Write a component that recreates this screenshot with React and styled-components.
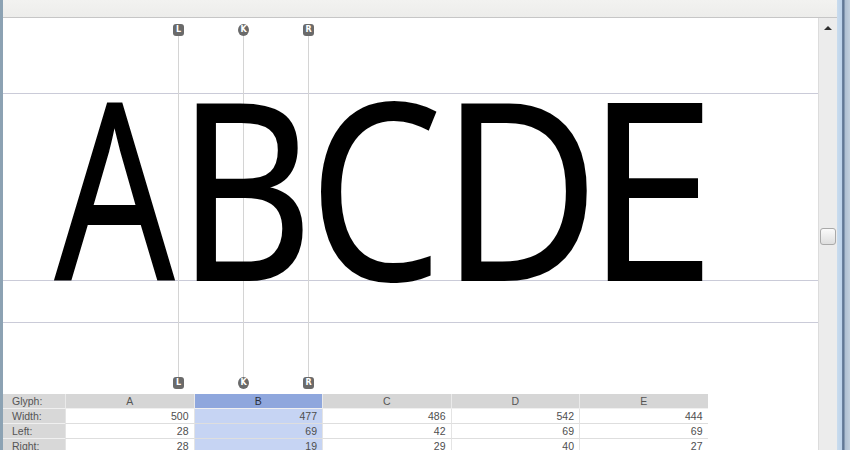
import React from "react";
import styled, { createGlobalStyle } from "styled-components";

const GlobalStyle = createGlobalStyle`
  html, body {
    margin: 0;
    padding: 0;
    background: #ffffff;
  }
  body {
    font-family: "Liberation Sans", Arial, sans-serif;
  }
`;

// units -> px in the metrics view
const UNIT = 0.2725;

const glyphs = [
  { ch: "A", width: 500, left: 28, right: 28, stretch: 0.77, shift: 13 },
  { ch: "B", width: 477, left: 69, right: 19, stretch: 0.86, shift: -1 },
  { ch: "C", width: 486, left: 42, right: 29, stretch: 0.86, shift: 1 },
  { ch: "D", width: 542, left: 69, right: 40, stretch: 0.89, shift: 0 },
  { ch: "E", width: 444, left: 69, right: 27, stretch: 0.95, shift: -2 },
];
const selected = "B";

const Window = styled.div`
  width: 850px;
  height: 450px;
  display: flex;
  flex-direction: row;
  overflow: hidden;
  background: #fff;
`;

const LeftEdge = styled.div`
  width: 3px;
  background: #8ca2b3;
`;

const Content = styled.div`
  flex: 1;
  display: flex;
  flex-direction: column;
  min-width: 0;
`;

const TopStrip = styled.div`
  height: 17px;
  flex-shrink: 0;
  background: linear-gradient(#f2f2f0, #ededeb);
  border-bottom: 1px solid #c6c6c6;
`;

const Body = styled.div`
  flex: 1;
  display: flex;
  flex-direction: row;
  min-height: 0;
`;

const Main = styled.div`
  flex: 1;
  display: flex;
  flex-direction: column;
  overflow: hidden;
`;

const Canvas = styled.div`
  position: relative;
  height: 376px;
  flex-shrink: 0;
  padding-top: 41px;
  box-sizing: border-box;
`;

const MetricLine = styled.div`
  position: absolute;
  left: 0;
  right: 0;
  top: ${(p) => p.$y}px;
  height: 1px;
  background: #cacbd8;
`;

const Guide = styled.div`
  position: absolute;
  left: ${(p) => p.$x}px;
  top: 18px;
  height: 341px;
  width: 1px;
  background: #d4d4d4;
`;

const Marker = styled.div`
  position: absolute;
  left: ${(p) => p.$x - 5}px;
  top: ${(p) => p.$y - 6}px;
  width: 11px;
  height: 12px;
  border-radius: ${(p) => (p.$round ? "50%" : "3px")};
  background: #6a6a6a;
  color: #fff;
  font-family: "DejaVu Sans", sans-serif;
  font-weight: bold;
  font-size: 8px;
  line-height: 12px;
  text-align: center;
`;

const GlyphRow = styled.div`
  display: flex;
  flex-direction: row;
  padding-left: 39px;
  position: relative;
`;

const GlyphCell = styled.div`
  width: ${(p) => p.$w}px;
  flex-shrink: 0;
  height: 252px;
  position: relative;
`;

const Letter = styled.span`
  display: inline-block;
  font-family: "Open Sans", sans-serif;
  font-size: 245px;
  line-height: 252px;
  color: #000;
  -webkit-text-stroke: 2px #000;
  white-space: nowrap;
  transform-origin: left center;
  transform: translateX(${(p) => p.$shift}px) scaleX(${(p) => p.$stretch});
`;

const Table = styled.div`
  display: grid;
  grid-template-columns: 62px repeat(5, 128.5px);
  grid-auto-rows: 15px;
  font-size: 10.5px;
  color: #4e4e4e;
`;

const LabelCell = styled.div`
  background: #d8d8d8;
  border-bottom: 1px solid #f0f0f0;
  padding-left: 9px;
  line-height: 14px;
  color: #555;
`;

const HeadCell = styled.div`
  background: ${(p) => (p.$selected ? "#8fa7dd" : "#d6d6d6")};
  border-bottom: 1px solid #f0f0f0;
  border-left: 1px solid #eaeaea;
  text-align: center;
  line-height: 14px;
  color: ${(p) => (p.$selected ? "#2a2f3a" : "#555")};
`;

const ValueCell = styled.div`
  background: ${(p) => (p.$selected ? "#c6d4f3" : "#ffffff")};
  border-bottom: 1px solid #dedede;
  border-left: 1px solid #e4e4e4;
  text-align: right;
  padding-right: 5px;
  line-height: 14px;
`;

const Scrollbar = styled.div`
  width: 18px;
  position: relative;
  background: #ececec;
  border-left: 1px solid #dcdcdc;
`;

const UpArrow = styled.div`
  position: absolute;
  left: 5px;
  top: 8px;
  width: 0;
  height: 0;
  border-left: 4px solid transparent;
  border-right: 4px solid transparent;
  border-bottom: 4px solid #2e2e2e;
`;

const Thumb = styled.div`
  position: absolute;
  left: 1px;
  top: 210px;
  width: 14px;
  height: 15px;
  border: 1px solid #a9a9a9;
  border-radius: 3px;
  background: linear-gradient(#fafafa, #dedede);
`;

const Frame = styled.div`
  width: 13px;
  background: linear-gradient(
    to right,
    #c9dcee 0px,
    #bcd2ea 5px,
    #6f86a3 5px,
    #5c7391 7px,
    #aebfd2 8px,
    #c2d0de 13px
  );
`;

const rows = [
  { label: "Width:", key: "width" },
  { label: "Left:", key: "left" },
  { label: "Right:", key: "right" },
];

const selIndex = glyphs.findIndex((g) => g.ch === selected);
const selStart = 39 + glyphs.slice(0, selIndex).reduce((s, g) => s + g.width * UNIT, 0);
const selEnd = selStart + glyphs[selIndex].width * UNIT;

const guides = [
  { x: selStart, label: "L" },
  { x: (selStart + selEnd) / 2, label: "K", round: true },
  { x: selEnd, label: "R" },
];

export default function App() {
  return (
    <>
      <GlobalStyle />
      <Window>
        <LeftEdge />
        <Content>
          <TopStrip />
          <Body>
            <Main>
              <Canvas>
                <MetricLine $y={75} />
                <MetricLine $y={262} />
                <MetricLine $y={304} />
                {guides.map((g) => (
                  <Guide key={g.label} $x={Math.round(g.x)} />
                ))}
                <GlyphRow>
                  {glyphs.map((g) => (
                    <GlyphCell key={g.ch} $w={g.width * UNIT}>
                      <Letter $stretch={g.stretch} $shift={g.shift}>
                        {g.ch}
                      </Letter>
                    </GlyphCell>
                  ))}
                </GlyphRow>
                {guides.map((g) => (
                  <React.Fragment key={g.label}>
                    <Marker $x={Math.round(g.x)} $y={12} $round={g.round}>
                      {g.label}
                    </Marker>
                    <Marker $x={Math.round(g.x)} $y={365} $round={g.round}>
                      {g.label}
                    </Marker>
                  </React.Fragment>
                ))}
              </Canvas>
              <Table>
                <LabelCell>Glyph:</LabelCell>
                {glyphs.map((g) => (
                  <HeadCell key={g.ch} $selected={g.ch === selected}>
                    {g.ch}
                  </HeadCell>
                ))}
                {rows.map((r) => (
                  <React.Fragment key={r.key}>
                    <LabelCell>{r.label}</LabelCell>
                    {glyphs.map((g) => (
                      <ValueCell key={g.ch} $selected={g.ch === selected}>
                        {g[r.key]}
                      </ValueCell>
                    ))}
                  </React.Fragment>
                ))}
              </Table>
            </Main>
            <Scrollbar>
              <UpArrow />
              <Thumb />
            </Scrollbar>
          </Body>
        </Content>
        <Frame />
      </Window>
    </>
  );
}
